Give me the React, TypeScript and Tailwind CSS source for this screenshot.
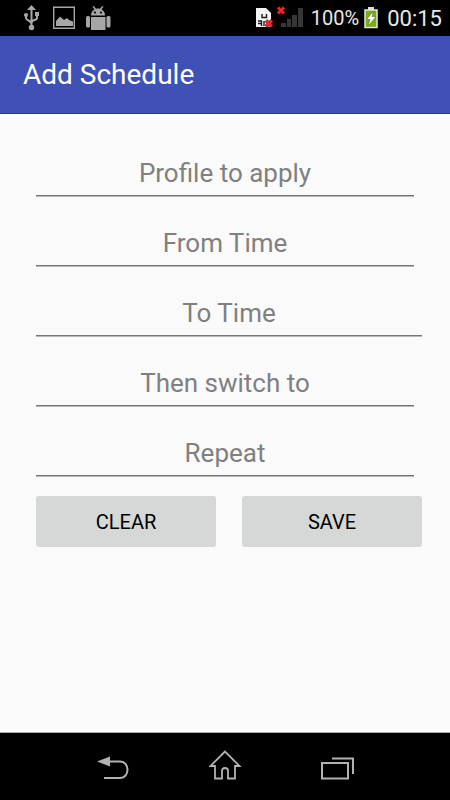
import { useState } from "react";
import clsx from "clsx";

type Field = {
  name: string;
  label: string;
  wide?: boolean;
}

const fields: Field[] = [
  { name: "profile", label: "Profile to apply" },
  { name: "from", label: "From Time" },
  { name: "to", label: "To Time", wide: true },
  { name: "next", label: "Then switch to" },
  { name: "repeat", label: "Repeat" },
];

function StatusBar() {
  return (
    <div className="flex h-9 items-center justify-between bg-black pl-[22px] pr-2 text-[#e8e8e8]">
      <div className="flex items-center gap-[9px]">
        <svg width="21" height="26" viewBox="-1 0 21 26" fill="none" stroke="#a6a6a6" strokeWidth="2">
          <path d="M8.500 4v18M3 10v3c0 3 5.500 2 5.500 6M14 9v4c0 3-5.500 1-5.500 5" />
          <path d="M8.500 0l4.500 5H4z" fill="#a6a6a6" stroke="none" />
          <circle cx="8.500" cy="22.500" r="2.700" fill="#a6a6a6" stroke="none" />
          <circle cx="3" cy="10" r="2.100" fill="#a6a6a6" stroke="none" />
          <path d="M12 7h4v4h-4z" fill="#a6a6a6" stroke="none" />
        </svg>
        <svg width="24" height="24" viewBox="0 0 24 24">
          <path d="M1.700 1.200h20.600v21H1.700z" fill="none" stroke="#a6a6a6" strokeWidth="1.400" />
          <path d="M4 20v-5l4-4.500 4 3.500 3-2 2 2 4 1.500V20z" fill="#a6a6a6" />
        </svg>
        <svg width="26" height="26" viewBox="0 0 26 26" fill="#a6a6a6">
          <path d="M6 10.500c0-3 1.500-5 3.500-6L7.500 1.800l1.200-.8L11 3.800c1.300-.4 2.700-.4 4 0L17.300 1l1.200.8-2 2.700c2 1 3.500 3 3.500 6z" />
          <path d="M6 12h14.500v13H6z" />
          <rect x="1" y="11" width="4" height="11.500" rx="1.500" />
          <rect x="21.500" y="11" width="4" height="11.500" rx="1.500" />
          <circle cx="10" cy="7.500" r="1.100" fill="#000" />
          <circle cx="16" cy="7.500" r="1.100" fill="#000" />
        </svg>
      </div>
      <div className="flex items-center">
        <svg width="48" height="26" viewBox="0 0 48 26">
          <path d="M1 3h10l5 5v14H1z" fill="#f4f4f4" />
          <path d="M3 14.500h13" stroke="#f4f4f4" strokeWidth="1.500" />
          <path d="M7 9v3.500h4.500V9M3 16h3.500v5M3 18.500h3M9 16v5" fill="none" stroke="#1a1a1a" strokeWidth="1.400" />
          <path d="M11 15.500l6 6M17 15.500l-6 6M23 2.500l6 6M29 2.500l-6 6" stroke="#7c0d0d" strokeWidth="3.600" />
          <path d="M11 15.500l6 6M17 15.500l-6 6M23 2.500l6 6M29 2.500l-6 6" stroke="#f5292c" strokeWidth="2.300" />
          <path d="M26 18h5v4h-5zM32 14h4v8h-4zM37 10h5v12h-5zM43 3h5v19h-5z" fill="#363636" />
        </svg>
        <span className="ml-2 text-xl">100%</span>
        <svg className="ml-1" width="16" height="24" viewBox="0 0 16 24">
          <path d="M5 1h6v3H5z" fill="#ddd" />
          <path d="M2 4h12v17.500H2z" fill="#79ad12" stroke="#e4e4e4" strokeWidth="1.500" />
          <path d="M10.500 5L3.500 13.500H7L5 20.500l8-10H9z" fill="#fff" stroke="#405f10" strokeWidth=".5" />
        </svg>
        <span className="ml-2 text-[22px]">00:15</span>
      </div>
    </div>
  )
}

function NavBar() {
  return (
    <nav className="flex h-[68px] items-start justify-center gap-[76px] border-t border-[#aaa] bg-black pt-4">
      <button type="button" aria-label="Back">
        <svg className="block" width="36" height="36" viewBox="0 0 36 36" fill="none" stroke="#b2b2b2" strokeWidth="2">
          <path d="M14 12.500h11c10 0 10 16.500 0 16.500H9" />
          <path d="M2 12.500L15 7.500v10z" fill="#b2b2b2" stroke="none" />
        </svg>
      </button>
      <button type="button" aria-label="Home">
        <svg className="block" width="36" height="36" viewBox="0 0 36 36" fill="none" stroke="#b2b2b2" strokeWidth="1.800">
          <path d="M18 2.500L3.500 17H8v12.500h7V22c0-4 6-4 6 0v7.500h7V17h4.500z" />
        </svg>
      </button>
      <button type="button" aria-label="Recent apps">
        <svg className="block" width="36" height="36" viewBox="0 0 36 36" fill="none" stroke="#b2b2b2" strokeWidth="2">
          <path d="M3 14h26v15.500H3zM13 9.500h21V25" />
        </svg>
      </button>
    </nav>
  )
}

function App() {
  const [values, setValues] = useState<Record<string, string>>({});

  return (
    <div className="flex min-h-screen flex-col bg-[#fafafa] font-[Roboto,sans-serif]">
      <StatusBar />
      <header className="flex h-[78px] items-center border-b border-[#263a9c] bg-[#3f51b5] px-[23px]">
        <h1 className="text-[28px] text-white">Add Schedule</h1>
      </header>

      <form
        onSubmit={(e) => e.preventDefault()}
        className="flex flex-1 flex-col gap-6 pl-9 pr-7 pt-9"
      >
        {fields.map((field) => (
          <div key={field.name} className={clsx("flex", !field.wide && "pr-2")}>
            <input
              type="text"
              name={field.name}
              aria-label={field.label}
              placeholder={field.label}
              value={values[field.name] ?? ""}
              onChange={(e) => setValues({ ...values, [field.name]: e.target.value })}
              className="h-[46px] w-full border-b border-[#757575] text-center text-[26px] text-black shadow-[0_1px_0_#b8b8b8] outline-none placeholder:text-[#808080]"
            />
          </div>
        ))}
        <div className="-mt-1 flex gap-[26px]">
          <button
            type="button"
            onClick={() => setValues({})}
            className="h-[51px] flex-1 rounded-[3px] bg-[#d6d8d7] text-xl text-black"
          >
            CLEAR
          </button>
          <button type="submit" className="h-[51px] flex-1 rounded-[3px] bg-[#d6d8d7] text-xl text-black">
            SAVE
          </button>
        </div>
      </form>
      <NavBar />
    </div>
  )
}

export default App
